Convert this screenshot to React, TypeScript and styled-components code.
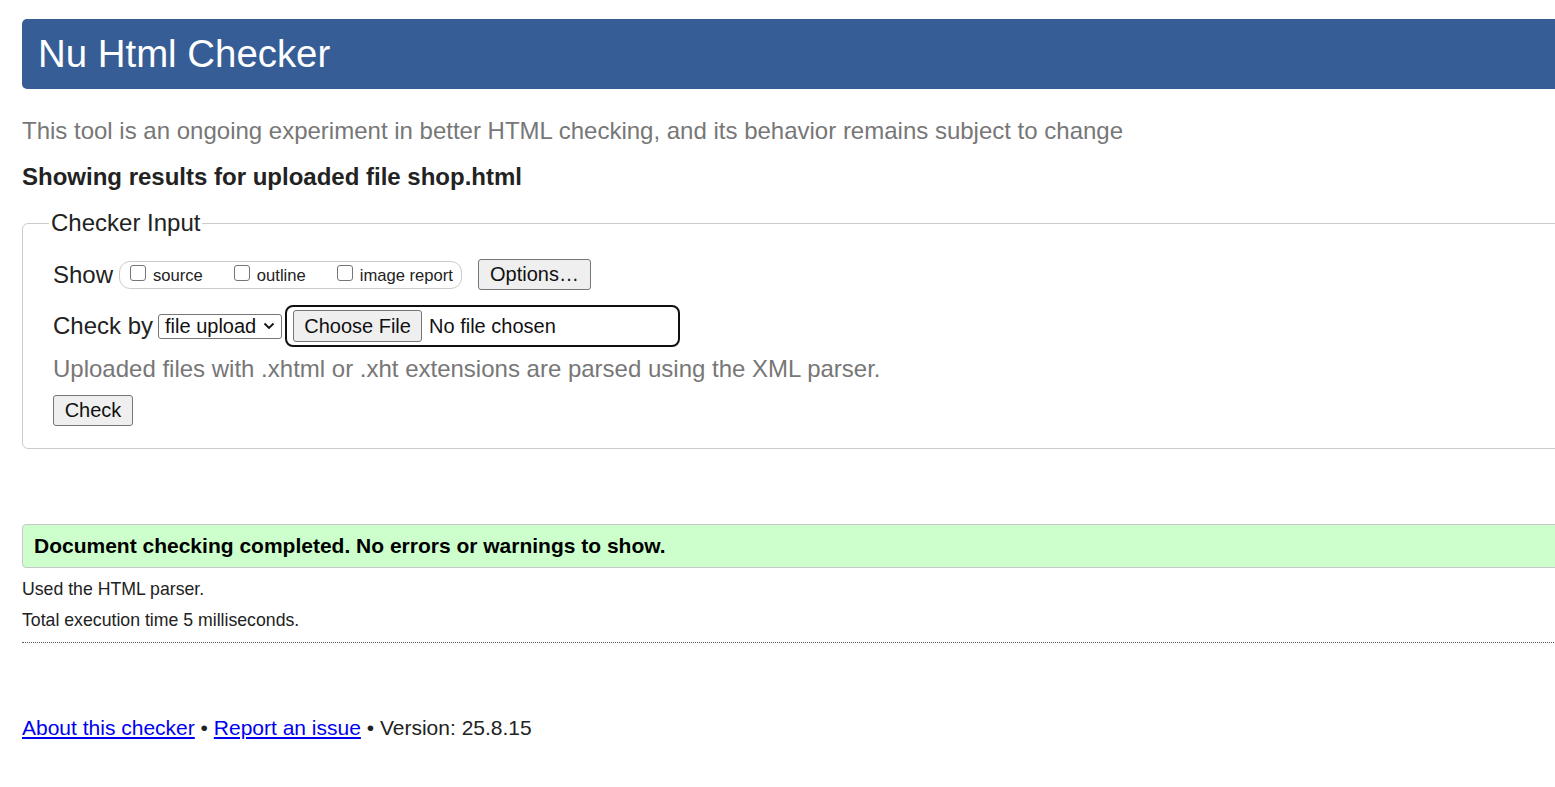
import styled, { createGlobalStyle } from 'styled-components';

const GlobalStyle = createGlobalStyle`
  html, body {
    margin: 0;
    padding: 0;
    overflow: hidden;
    background: #fff;
  }
  body {
    font-family: "Liberation Sans", Arial, sans-serif;
    color: #222;
  }
`;

const Page = styled.div`
  width: 1600px;
  padding: 19px 0 0 22px;
`;

const Header = styled.h1`
  margin: 0;
  height: 70px;
  display: flex;
  align-items: center;
  padding-left: 16px;
  background: #365d95;
  color: #fff;
  border-radius: 5px;
  font-size: 38.4px;
  font-weight: normal;
`;

const Intro = styled.p`
  margin: 28px 0 0;
  font-size: 24px;
  color: #777;
`;

const Results = styled.h2`
  margin: 18px 0 0;
  font-size: 24px;
  font-weight: bold;
  color: #222;
`;

const Fieldset = styled.fieldset`
  margin: 18px 0 0;
  padding: 8px 30px 22px;
  border: 1px solid #ccc;
  border-radius: 6px;
`;

const Legend = styled.legend`
  font-size: 24px;
  padding: 0 2px;
  margin-left: -4px;
  margin-top: -2px;
  color: #222;
`;

const Row = styled.div<{ $gap?: number }>`
  display: flex;
  align-items: center;
  margin-top: ${(p) => p.$gap ?? 0}px;
  font-size: 24px;
`;

const ShowGroup = styled.div`
  display: flex;
  align-items: center;
  gap: 31px;
  margin-left: 6px;
  height: 26px;
  padding: 0 8px 0 10px;
  border: 1px solid #ccc;
  border-radius: 11px;
`;

const CheckLabel = styled.label`
  display: flex;
  align-items: center;
  font-size: 16.6px;
  color: #222;
  margin-top: 3px;
`;

const Box = styled.span`
  width: 16px;
  height: 16px;
  box-sizing: border-box;
  border: 1px solid #767676;
  border-radius: 3px;
  margin-right: 7px;
  margin-top: -7px;
`;

const Button = styled.span<{ $w: number; $h: number }>`
  display: inline-flex;
  align-items: center;
  justify-content: center;
  box-sizing: border-box;
  width: ${(p) => p.$w}px;
  height: ${(p) => p.$h}px;
  font-size: 20px;
  color: #111;
  background: #efefef;
  border: 1px solid #767676;
  border-radius: 3px;
`;

const OptionsWrap = styled.span`
  margin-left: 16px;
`;

const Select = styled.span`
  display: inline-flex;
  align-items: center;
  justify-content: space-between;
  box-sizing: border-box;
  margin-left: 5px;
  height: 25px;
  width: 124px;
  padding: 0 6px 0 6px;
  font-size: 20px;
  color: #111;
  border: 1px solid #767676;
  border-radius: 3px;
`;

const FileBox = styled.span`
  display: inline-flex;
  align-items: center;
  box-sizing: border-box;
  margin-left: 3px;
  width: 395px;
  height: 42px;
  padding-left: 6px;
  border: 2px solid #101010;
  border-radius: 8px;
  font-size: 20px;
  color: #111;
`;

const FileName = styled.span`
  margin-left: 7px;
`;

const Note = styled.p`
  margin: 8px 0 0;
  font-size: 24px;
  color: #777;
`;

const CheckWrap = styled.div`
  margin-top: 12px;
`;

const Success = styled.div`
  margin-top: 75px;
  height: 44px;
  box-sizing: border-box;
  display: flex;
  align-items: center;
  padding-left: 11px;
  background: #ccffcc;
  border: 1px solid #c8c8c8;
  border-radius: 4px;
  font-size: 21px;
  font-weight: bold;
  color: #000;
`;

const Detail = styled.p<{ $top: number }>`
  margin: ${(p) => p.$top}px 0 0;
  font-size: 17.7px;
  color: #222;
`;

const Rule = styled.hr`
  margin: 11px 0 0;
  border: 0;
  border-top: 1px dotted #555;
`;

const Footer = styled.p`
  margin: 73px 0 0;
  font-size: 21px;
  color: #222;
  a {
    color: #0000ee;
  }
`;

function Chevron() {
  return (
    <svg width="12" height="8" viewBox="0 0 12 8">
      <path d="M1.5 1.5 L6 6 L10.5 1.5" fill="none" stroke="#111" strokeWidth="1.8" />
    </svg>
  );
}

const options = ['source', 'outline', 'image report'];

export default function App() {
  return (
    <>
      <GlobalStyle />
      <Page>
        <Header>Nu Html Checker</Header>
        <Intro>This tool is an ongoing experiment in better HTML checking, and its behavior remains subject to change</Intro>
        <Results>Showing results for uploaded file shop.html</Results>
        <Fieldset>
          <Legend>Checker Input</Legend>
          <Row $gap={14}>
            Show
            <ShowGroup>
              {options.map((o) => (
                <CheckLabel key={o}>
                  <Box />
                  {o}
                </CheckLabel>
              ))}
            </ShowGroup>
            <OptionsWrap>
              <Button $w={113} $h={31}>Options…</Button>
            </OptionsWrap>
          </Row>
          <Row $gap={15}>
            Check by
            <Select>
              file upload
              <Chevron />
            </Select>
            <FileBox>
              <Button $w={129} $h={32}>Choose File</Button>
              <FileName>No file chosen</FileName>
            </FileBox>
          </Row>
          <Note>Uploaded files with .xhtml or .xht extensions are parsed using the XML parser.</Note>
          <CheckWrap>
            <Button $w={80} $h={31}>Check</Button>
          </CheckWrap>
        </Fieldset>
        <Success>Document checking completed. No errors or warnings to show.</Success>
        <Detail $top={11}>Used the HTML parser.</Detail>
        <Detail $top={10}>Total execution time 5 milliseconds.</Detail>
        <Rule />
        <Footer>
          <a href="#">About this checker</a> • <a href="#">Report an issue</a> • Version: 25.8.15
        </Footer>
      </Page>
    </>
  );
}
